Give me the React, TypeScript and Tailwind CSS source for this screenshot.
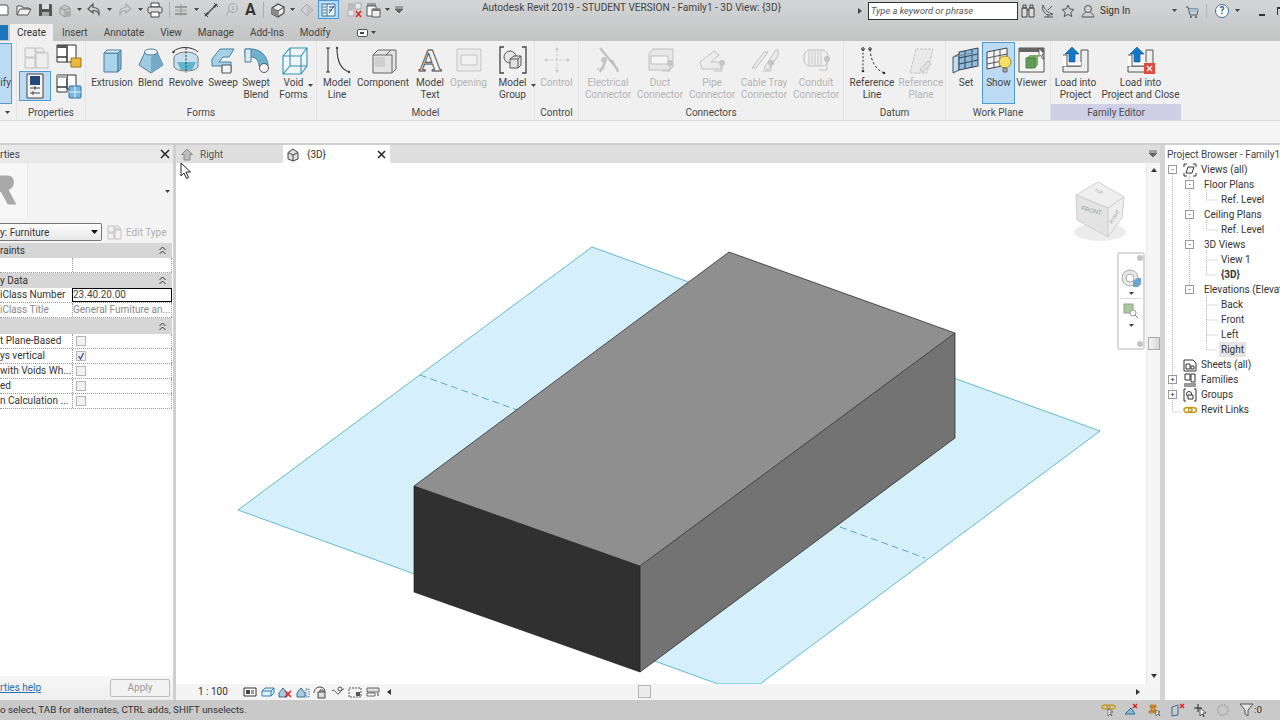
import type { ReactNode } from 'react'

const FONT = "font-['Roboto','Liberation_Sans',sans-serif]"

function Ic({ w = 28, h = 28, box, children, dim }: { w?: number; h?: number; box?: string; children: ReactNode; dim?: boolean }) {
  return (
    <svg width={w} height={h} viewBox={box ?? `0 0 ${w} ${h}`} className={dim ? 'shrink-0 overflow-visible opacity-35' : 'shrink-0 overflow-visible'}>
      {children}
    </svg>
  )
}

const Caret = () => (
  <svg width="5" height="3" viewBox="0 0 5 3" className="shrink-0">
    <path d="M0 0h5L2.5 3z" fill="#444" />
  </svg>
)

/* ---------- quick access icons ---------- */
const QNew = () => <Ic w={9} h={18}><path d="M-6 4h13l1 2v8H-6z" fill="#fff" stroke="#555" /></Ic>
const QOpen = () => <Ic w={16} h={18}><path d="M1 14V5h5l1 2h6v2M1 14l3-6h11l-3 6z" fill="#eee" stroke="#555" /></Ic>
const QSave = () => <Ic w={15} h={18}><path d="M1 3h12l1 1v11H1z" fill="#555" /><path d="M4 3h7v5H4z" fill="#ddd" /><path d="M4 11h7v4H4z" fill="#aaa" /></Ic>
const QSync = () => <Ic w={16} h={18}><path d="M3 7l5-3 5 3v6l-5 3-5-3z" fill="#c8c8c8" stroke="#999" /><path d="M8 9l5-2M8 9L3 7M8 9v7" stroke="#999" fill="none" /><circle cx="11" cy="13" r="3" fill="#aaa" /></Ic>
const QUndo = () => <Ic w={15} h={18}><path d="M6 3L1 8l5 4V9.5c3 0 5 1 6 4 1-5-2-7-6-7z" fill="none" stroke="#555" strokeWidth="1.2" /></Ic>
const QRedo = () => <Ic w={15} h={18} dim><path d="M9 3l5 5-5 4V9.5c-3 0-5 1-6 4-1-5 2-7 6-7z" fill="none" stroke="#666" strokeWidth="1.2" /></Ic>
const QPrint = () => <Ic w={16} h={18}><path d="M4 2h8v4H4z" fill="#fff" stroke="#444" /><rect x="1" y="6" width="14" height="6" rx="1.5" fill="#ddd" stroke="#444" /><path d="M4 11h8v5H4z" fill="#fff" stroke="#444" /></Ic>
const QAlign = () => <Ic w={14} h={18}><path d="M1 6h12M1 13h12" stroke="#888" strokeWidth="1.4" /><path d="M1 8h12v3H1z" fill="#bbb" /><path d="M7 3v12" stroke="#999" /></Ic>
const QMeasure = () => <Ic w={16} h={18}><path d="M2 15L14 3" stroke="#444" strokeWidth="1.3" /><path d="M1 12l4 4M11 2l4 4" stroke="#444" /><path d="M3 14l3-1-2-2zM13 4l-3 1 2 2z" fill="#333" /></Ic>
const QTag = () => <Ic w={14} h={18} dim><circle cx="9" cy="7" r="4.5" fill="none" stroke="#555" /><path d="M5 10l-3 5" stroke="#555" /><path d="M9 5v4" stroke="#555" /></Ic>
const Q3D = () => <Ic w={16} h={18}><path d="M2 7l6-4 6 3v6l-6 4-6-3z" fill="#e9e9e9" stroke="#444" strokeWidth="1.2" /><path d="M2 7l6 3 6-4M8 10v6" stroke="#444" fill="none" /><path d="M2 7l6 3v6l-6-3z" fill="#888" /></Ic>
const QSection = () => <Ic w={14} h={18} dim><path d="M7 3l6 6-6 6-6-6z" fill="none" stroke="#555" /><path d="M7 3l6 6-6 6z" fill="#aaa" /></Ic>
const QThin = () => (
  <div className="flex h-[19px] w-[21px] items-center justify-center border border-[#4f97d3] bg-[#bcdcf4]">
    <Ic w={15} h={15}><path d="M1 2h13v12H1z" fill="#e7f3fb" stroke="#3b6f94" /><path d="M6 2v12M2 5h3M2 8h3M2 11h3" stroke="#3b6f94" /><path d="M8 11l5-7M8 5h5M8 8h3" stroke="#2d4c6a" /></Ic>
  </div>
)
const QHidden = () => <Ic w={15} h={18}><path d="M1 2h6v6H1z" fill="#bbb" /><path d="M8 2h6v6H8z" fill="#e8e8e8" stroke="#aaa" /><path d="M1 9h6v6H1z" fill="#e8e8e8" stroke="#aaa" /><path d="M9 10l5 6M14 10l-5 6" stroke="#d22" strokeWidth="1.5" /></Ic>
const QSwitch = () => <Ic w={15} h={18}><path d="M1 2h9v3H1z" fill="#999" /><path d="M1 5h9v10H1z" fill="#fff" stroke="#555" /><path d="M6 8h8v8H6z" fill="#eee" stroke="#555" /><path d="M6 8h8v2H6z" fill="#777" /></Ic>
const QCustom = () => <Ic w={8} h={18}><path d="M0 6h8M0 8h8L4 12z" stroke="#666" fill="#666" /></Ic>

function QuickAccess() {
  return (
    <div className="flex h-[19px] w-[858px] shrink-0 items-center">
      <QNew />
      <div className="ml-[7px]"><QOpen /></div>
      <div className="ml-[6px]"><QSave /></div>
      <div className="ml-[4px]"><QSync /></div>
      <div className="ml-[4px]"><Caret /></div>
      <div className="ml-[5px]"><QUndo /></div>
      <div className="ml-[5px]"><Caret /></div>
      <div className="ml-[5px]"><QRedo /></div>
      <div className="ml-[6px]"><Caret /></div>
      <div className="ml-[4px]"><QPrint /></div>
      <div className="ml-[6px] h-[16px] w-px bg-[#aeb0b0]" />
      <div className="ml-[4px]"><QAlign /></div>
      <div className="ml-[6px]"><Caret /></div>
      <div className="ml-[4px]"><QMeasure /></div>
      <div className="ml-[5px]"><QTag /></div>
      <span className="ml-[7px] w-[13px] text-[16px] leading-[18px] font-bold text-[#333]">A</span>
      <div className="ml-[5px] h-[16px] w-px bg-[#aeb0b0]" />
      <div className="ml-[6px]"><Q3D /></div>
      <div className="ml-[4px]"><Caret /></div>
      <div className="ml-[5px]"><QSection /></div>
      <div className="ml-[4px]"><QThin /></div>
      <div className="ml-[8px]"><QHidden /></div>
      <div className="ml-[4px]"><QSwitch /></div>
      <div className="ml-[4px]"><Caret /></div>
      <div className="ml-[5px]"><QCustom /></div>
    </div>
  )
}

function TitleBar() {
  return (
    <div className="relative flex h-[22px] items-start">
      <QuickAccess />
      <div className="absolute top-[1px] left-[482px] text-[10.1px] leading-[14px] whitespace-nowrap text-[#444]">
        Autodesk Revit 2019 - STUDENT VERSION - Family1 - 3D View: {'{3D}'}
      </div>
      <div className="mt-px flex h-[19px] shrink-0 items-center">
        <svg width="4" height="6" viewBox="0 0 4 6" className="mr-[6px]"><path d="M0 0l4 3-4 3z" fill="#444" /></svg>
        <div className="flex h-[18px] w-[150px] items-center border border-[#333] bg-white pl-[2px] text-[9.3px] text-[#555] italic">
          Type a keyword or phrase
        </div>
        <div className="ml-[3px]">
          <Ic w={14} h={16}><path d="M1 5h5v9H1zM8 5h5v9H8z" fill="#ddd" stroke="#444" /><path d="M2 2h3v3H2zM9 2h3v3H9zM6 7h2" fill="none" stroke="#444" /></Ic>
        </div>
        <div className="ml-[6px]">
          <Ic w={14} h={16}><path d="M2 2c2 5 5 8 10 9-3 2-7 1-9-2S1 4 2 2z" fill="none" stroke="#555" /><path d="M7 7l4-4M3 14h9M7 11v3" stroke="#555" /></Ic>
        </div>
        <div className="ml-[6px]">
          <Ic w={14} h={16}><path d="M7 2l1.8 4 4.2.4-3.2 2.9 1 4.3L7 11.4l-3.8 2.2 1-4.3L1 6.4 5.2 6z" fill="none" stroke="#555" /></Ic>
        </div>
        <div className="ml-[6px]">
          <Ic w={14} h={16}><circle cx="7" cy="6" r="3.5" fill="none" stroke="#555" /><path d="M1 14c1-4 3-4 4-4.5M13 14c-1-4-3-4-4-4.5M1 14h12" fill="none" stroke="#555" /></Ic>
        </div>
        <span className="ml-[5px] w-[72px] shrink-0 text-[10px] text-[#333]">Sign In</span>
        <Caret />
        <div className="ml-[8px]">
          <Ic w={14} h={16}><path d="M1 4h2l2 8h7l1-6H4" fill="none" stroke="#555" /><circle cx="6" cy="14" r="1" fill="#555" /><circle cx="11" cy="14" r="1" fill="#555" /><path d="M4 6h9l-1 3H5z" fill="#9cc4dd" /></Ic>
        </div>
        <div className="ml-[7px] h-[14px] w-px bg-[#b5b6b6]" />
        <div className="ml-[8px] flex h-[14px] w-[14px] shrink-0 items-center justify-center rounded-full border border-[#3f6e9e] bg-white text-[10px] font-bold text-[#2c5f96]">?</div>
        <div className="ml-[6px]"><Caret /></div>
        <div className="mt-[8px] ml-[19px] h-[2px] w-[6px] shrink-0 bg-[#333]" />
        <div className="ml-[12px] h-[8px] w-[8px] shrink-0 border-t-2 border-l border-[#333]" />
      </div>
    </div>
  )
}

const TABS = ['Insert', 'Annotate', 'View', 'Manage', 'Add-Ins', 'Modify']

function TabBar() {
  return (
    <div className="flex h-[19px] items-end gap-[16px] text-[10px] text-[#444]">
      <div className="flex items-end gap-[2px]">
        <div className="mb-px h-[15px] w-[8px] bg-[#1b75bc]" />
        <div className="-mr-[7px] flex h-[17px] w-[43px] items-center justify-center bg-[#efefef] text-[#333]">Create</div>
      </div>
      {TABS.map((label) => (
        <div key={label} className="flex h-[17px] items-center">{label}</div>
      ))}
      <div className="ml-[10px] flex h-[17px] items-center gap-[3px]">
        <div className="flex h-[8px] w-[11px] items-center justify-center rounded-[2px] border border-[#555] bg-white">
          <div className="h-[2px] w-[4px] bg-[#444]" />
        </div>
        <Caret />
      </div>
    </div>
  )
}

/* ---------- ribbon icons ---------- */
const S = '#4d7f9d'
const Extrusion = () => <Ic><path d="M6 7h14v19H6z" fill="#a9d3e9" stroke={S} /><path d="M6 7l3-3h14l-3 3z" fill="#dceef7" stroke={S} /><path d="M20 7l3-3v19l-3 3z" fill="#7fb3ce" stroke={S} /></Ic>
const Blend = () => <Ic><path d="M8 6L2 19l12 8 12-8-6-13z" fill="#9ecbe3" stroke={S} /><path d="M14 27l12-8-6-13-6 5z" fill="#74aac8" /><ellipse cx="14" cy="6" rx="6.5" ry="3" fill="#eef7fb" stroke={S} /></Ic>
const Revolve = () => <Ic><path d="M2 12c0-3 5-6 12-6s12 3 12 6v8c0 3-5 5-12 5S2 23 2 20z" fill="#c7dfec" stroke="#777" /><path d="M5 16h19l-4 8H9z" fill="#5fb4cf" /><path d="M1 6C6 0 20 0 26 6" fill="none" stroke="#333" /><path d="M14 2v25" stroke="#333" strokeDasharray="2 1.5" /><circle cx="1.5" cy="6" r="1.2" fill="#333" /></Ic>
const Sweep = () => <Ic><path d="M3 13L11 3h14l-5 8h-6l-4 5h12v10H13v-6H3z" fill="#a6d2e8" stroke={S} /><path d="M13 19h9v8h-9z" fill="#f2f2f2" stroke="#555" /></Ic>
const SweptBlend = () => <Ic><path d="M3 3h6c10 0 17 8 17 17h-9c0-5-3-9-8-9H3z" fill="#6eb1cd" stroke={S} /><path d="M3 3h6v13H3z" fill="#d8ebf4" stroke={S} /><circle cx="22" cy="22" r="4.5" fill="#f4f4f4" stroke="#555" /></Ic>
const VoidF = () => <Ic><path d="M3 10h18v18H3zM3 10l7-8h17v18l-6 8M21 10l6-8M10 2v18h17M10 20l-7 8" fill="#f3fafd" fillOpacity=".5" stroke="#2f93b9" strokeWidth="1.1" /></Ic>
const ModelLine = () => <Ic><path d="M5 2v24M3 2h4M3 26h4" stroke="#333" /><path d="M14 2c0 14 4 22 13 24" fill="none" stroke="#444" strokeWidth="1.2" /><circle cx="14" cy="2" r="1.2" fill="#444" /><circle cx="26" cy="26" r="1.2" fill="#444" /></Ic>
const Component = () => <Ic><path d="M4 9l5-5h18v19l-4 4H4z" fill="#e3e3e3" stroke="#666" /><path d="M4 9h19v18" fill="none" stroke="#666" /><path d="M17 9l5-5" stroke="#666" /><path d="M6 11h10v10H6z" fill="#cfcfcf" /></Ic>
const ModelText = () => (
  <Ic>
    <text x="14" y="25" textAnchor="middle" fontFamily="Liberation Serif" fontSize="32" fontWeight="700" fill="#f5f5f5" stroke="#444" strokeWidth="0.9">A</text>
  </Ic>
)
const Opening = () => <Ic dim><path d="M2 3h24v22H2z" fill="#e6e6e6" stroke="#777" /><path d="M6 9h16v10H6z" fill="#f4f4f4" stroke="#777" /></Ic>
const ModelGroup = () => <Ic><path d="M5 1H1v26h4M23 1h4v26h-4" fill="none" stroke="#444" strokeWidth="1.3" /><circle cx="11" cy="11" r="6" fill="#e6e6e6" stroke="#555" /><path d="M11 13l4-3h7v9l-3 3h-8z" fill="#e3e3e3" stroke="#555" /><path d="M11 13h8v9M19 13l3-3" fill="none" stroke="#555" /></Ic>
const Control = () => <Ic dim><path d="M14 3v22M3 14h22" stroke="#888" strokeDasharray="3 1.5" /><path d="M14 1l-2 3h4zM14 27l-2-3h4zM1 14l3-2v4zM27 14l-3-2v4z" fill="#888" /></Ic>
const Electrical = () => <Ic dim><path d="M6 2l18 22M12 14l-6 12M18 14l6 12" stroke="#666" strokeWidth="2" /><circle cx="10" cy="14" r="3" fill="#777" /><path d="M10 17v6H3" stroke="#666" fill="none" /></Ic>
const Duct = () => <Ic dim><path d="M3 8l4-5h20v18l-4 3H3z" fill="#d8d8d8" stroke="#666" /><path d="M5 10h17v8H5z" fill="#fff" stroke="#666" /><circle cx="24" cy="17" r="3" fill="#777" /><path d="M24 20v5h-8" stroke="#666" fill="none" /></Ic>
const Pipe = () => <Ic dim><path d="M2 16l14-11 5 4-8 7h10v7H4z" fill="#e5e5e5" stroke="#666" /><circle cx="24" cy="17" r="3" fill="#777" /><path d="M24 20v5h-8" stroke="#666" fill="none" /></Ic>
const CableTray = () => <Ic dim><path d="M2 22L14 6h4L6 22zM14 22L26 4h2v6L18 24z" fill="#e2e2e2" stroke="#666" /><circle cx="21" cy="17" r="3" fill="#777" /><path d="M21 20v5h-8" stroke="#666" fill="none" /></Ic>
const Conduit = () => <Ic dim><rect x="2" y="4" width="24" height="16" rx="6" fill="#eee" stroke="#666" /><path d="M7 5v14M10 5v14M13 5v14M16 5v14M19 5v14" stroke="#777" /><circle cx="25" cy="13" r="3" fill="#777" /><path d="M25 16v8h-8" stroke="#666" fill="none" /></Ic>
const RefLine = () => <Ic><path d="M5 3v22" stroke="#333" strokeDasharray="2 1.6" /><path d="M12 3c1 12 5 20 14 24" fill="none" stroke="#333" strokeDasharray="2.5 2" /><circle cx="5" cy="25" r="1.3" fill="#333" /><circle cx="5" cy="3" r="1.3" fill="none" stroke="#333" /><circle cx="12" cy="3" r="1.3" fill="none" stroke="#333" /><circle cx="26" cy="27" r="1.3" fill="#333" /></Ic>
const RefPlane = () => <Ic dim><path d="M9 3h17l-6 24H3z" fill="#ddd" stroke="#777" strokeDasharray="3 1" /><path d="M13 24l8-9 3 3-8 8z" fill="#ccc" stroke="#666" /></Ic>
const SetIc = () => <Ic><path d="M1 11l6-3v16l-6 3z" fill="#c6dceb" stroke="#456" /><path d="M7 6l19-4v18L7 24z" fill="#8fbcdc" stroke="#345" /><path d="M13 5v18M20 3.5v18M7 12l19-4M7 18l19-4" stroke="#345" /><path d="M1 11l19-4v13" fill="none" stroke="#789" /></Ic>
const ShowIc = () => <Ic><path d="M2 6l20-4v17L2 23z" fill="#f3f6f8" stroke="#444" /><path d="M9 5v17M15 4v17M2 12l20-4M2 18l20-4" stroke="#555" /><circle cx="20" cy="16" r="6" fill="#f7e06a" stroke="#a88a25" /><path d="M18 22h4v4h-4z" fill="#aaa" stroke="#666" /></Ic>
const ViewerIc = () => (
  <Ic>
    <path d="M1 2h25v24H1z" fill="#f4f4f4" stroke="#555" /><path d="M1 2h25v4H1z" fill="#666" />
    <path d="M8 12l4-3h8v10l-3 3H8z" fill="#79ad68" /><path d="M8 12h9v10H8z" fill="#5f9d55" stroke="#4f7f44" />
    <path d="M21 2l5 6-2 .5 2 4-1.5.5-2-4-1.5 1.5z" fill="#fff" stroke="#333" strokeWidth=".7" />
  </Ic>
)
const Load = ({ close }: { close?: boolean }) => (
  <Ic w={28} h={28}>
    <path d="M19 4h7v22H1v-6h18z" fill="#eee" stroke="#555" />
    <path d="M1 9h6v11H1zM7 16h12v4H7z" fill="#fff" />
    <path d="M1 9h4v11h14" fill="none" stroke="#555" />
    <path d="M10 1l7 7h-4v8H7V8H3z" fill="#1277c8" stroke="#0b4f8a" strokeWidth=".6" />
    {close && <><rect x="17" y="17" width="11" height="11" fill="#dd4c3f" /><path d="M20 20l5 5M25 20l-5 5" stroke="#fff" strokeWidth="1.3" /></>}
  </Ic>
)

function RibbonBtn({ label, label2, icon, w, dim, caret, active }: { label: string; label2?: string; icon: ReactNode; w: number; dim?: boolean; caret?: boolean; active?: boolean }) {
  const box = active ? 'border border-[#4e9bd6] bg-[#bcdaf2]' : 'border border-transparent'
  const tone = dim ? 'text-[#b4b4b4]' : 'text-[#444]'
  return (
    <div className={`relative flex h-[62px] shrink-0 flex-col items-center ${box}`} style={{ width: w }}>
      <div className="mt-[3px] flex h-[31px] items-start justify-center">{icon}</div>
      <span className={`text-center leading-[12px] whitespace-nowrap ${tone}`}>{label}</span>
      {label2 && <span className={`text-center leading-[12px] whitespace-nowrap ${tone}`}>{label2}</span>}
      {caret && <div className="absolute right-[2px] bottom-[16px]"><Caret /></div>}
    </div>
  )
}

function Panel({ title, w, children, accent, line = true }: { title: string; w: number; children: ReactNode; accent?: boolean; line?: boolean }) {
  return (
    <div className={`flex h-[79px] shrink-0 flex-col ${line ? 'border-r border-[#e2e2e2]' : ''}`} style={{ width: w }}>
      <div className="flex h-[63px] pt-px">{children}</div>
      <div className={`flex h-[16px] items-center justify-center pt-px text-[#4a4a4a] ${accent ? 'bg-[#cfcfe6]' : ''}`}>{title}</div>
    </div>
  )
}

function Ribbon() {
  return (
    <div className="flex h-[79px] bg-[#f0f0f0] text-[10px]">
      <div className="flex h-[79px] w-[17px] shrink-0 flex-col border-r border-[#e2e2e2]">
        <div className="mt-[2px] flex h-[61px] w-[12px] items-center justify-end border border-l-0 border-[#4e9bd6] bg-[#bcdaf2] pt-[17px] text-[#444]">ify</div>
        <div className="flex h-[16px] items-center pl-[5px]"><Caret /></div>
      </div>
      <Panel title="Properties" w={69}>
        <div className="grid h-[60px] grid-cols-[34px_31px] items-center pl-[2px]">
          <div className="flex justify-center"><Ic w={25} h={25} dim><path d="M1 4h10v9H1zM1 14h10v10H1zM12 4h6l3 4H12zM12 9h12v15H12z" fill="#eee" stroke="#666" /></Ic></div>
          <div className="flex justify-center"><Ic w={26} h={26}><path d="M1 2h10v12H1zM11 2h9v17h-9zM1 14h10v5H1z" fill="#fff" stroke="#333" /><path d="M1 2h10v3H1z" fill="#555" /><path d="M15 15h10v9H15z" fill="#e8b93a" stroke="#9a7720" /></Ic></div>
          <div className="flex h-[30px] w-[32px] items-center justify-center border border-[#4e9bd6] bg-[#bcdaf2]">
            <Ic w={18} h={26}><path d="M1 1h16v24H1z" fill="#f4f4f4" stroke="#444" /><path d="M4 3h10v9H4z" fill="#22497a" /><path d="M4 15h10M4 20h10" stroke="#444" /><path d="M9 13v4M7 18v4" stroke="#444" /></Ic>
          </div>
          <div className="flex justify-center"><Ic w={26} h={26}><path d="M1 2h10v12H1zM11 2h9v14h-9zM1 14h10v5H1z" fill="#fff" stroke="#333" /><path d="M1 2h10v3H1z" fill="#aaa" /><rect x="13" y="13" width="12" height="12" rx="1" fill="#7bb6e0" stroke="#2a6ca5" /><path d="M19 13v12M13 19h12" stroke="#e4f2fb" /></Ic></div>
        </div>
      </Panel>
      <Panel title="Forms" w={231}>
        <div className="flex pl-[4px]">
          <RibbonBtn w={44} label="Extrusion" icon={<Extrusion />} />
          <RibbonBtn w={33} label="Blend" icon={<Blend />} />
          <RibbonBtn w={38} label="Revolve" icon={<Revolve />} />
          <RibbonBtn w={36} label="Sweep" icon={<Sweep />} />
          <RibbonBtn w={30} label="Swept" label2="Blend" icon={<SweptBlend />} />
          <RibbonBtn w={45} label="Void" label2="Forms" caret icon={<VoidF />} />
        </div>
      </Panel>
      <Panel title="Model" w={218}>
        <RibbonBtn w={40} label="Model" label2="Line" icon={<ModelLine />} />
        <RibbonBtn w={52} label="Component" icon={<Component />} />
        <RibbonBtn w={42} label="Model" label2="Text" icon={<ModelText />} />
        <RibbonBtn w={35} label="Opening" dim icon={<Opening />} />
        <RibbonBtn w={53} label="Model" label2="Group" caret icon={<ModelGroup />} />
      </Panel>
      <Panel title="Control" w={44}>
        <RibbonBtn w={43} label="Control" dim icon={<Control />} />
      </Panel>
      <Panel title="Connectors" w={265}>
        <div className="flex pl-[3px]">
          <RibbonBtn w={52} label="Electrical" label2="Connector" dim icon={<Electrical />} />
          <RibbonBtn w={52} label="Duct" label2="Connector" dim icon={<Duct />} />
          <RibbonBtn w={52} label="Pipe" label2="Connector" dim icon={<Pipe />} />
          <RibbonBtn w={52} label="Cable Tray" label2="Connector" dim icon={<CableTray />} />
          <RibbonBtn w={52} label="Conduit" label2="Connector" dim icon={<Conduit />} />
        </div>
      </Panel>
      <Panel title="Datum" w={102}>
        <div className="flex pl-[4px]">
          <RibbonBtn w={48} label="Reference" label2="Line" icon={<RefLine />} />
          <RibbonBtn w={50} label="Reference" label2="Plane" dim icon={<RefPlane />} />
        </div>
      </Panel>
      <Panel title="Work Plane" w={105}>
        <div className="flex pl-[4px]">
          <RibbonBtn w={32} label="Set" icon={<SetIc />} />
          <RibbonBtn w={33} label="Show" active icon={<ShowIc />} />
          <RibbonBtn w={33} label="Viewer" icon={<ViewerIc />} />
        </div>
      </Panel>
      <Panel title="Family Editor" w={130} accent line={false}>
        <div className="flex">
          <RibbonBtn w={49} label="Load into" label2="Project" icon={<Load />} />
          <RibbonBtn w={81} label="Load into" label2="Project and Close" icon={<Load close />} />
        </div>
      </Panel>
    </div>
  )
}

/* ---------- properties palette ---------- */
function SectionHead({ label, tall }: { label: string; tall?: boolean }) {
  return (
    <div className={`flex items-center justify-between bg-[#d6d6d6] pr-[6px] text-[#333] ${tall ? 'h-[16px]' : 'h-[15px]'}`}>
      <span>{label}</span>
      <svg width="7" height="9" viewBox="0 0 7 9"><path d="M0.5 4L3.5 1l3 3M0.5 8l3-3 3 3" fill="none" stroke="#333" /></svg>
    </div>
  )
}

function PropRow({ label, muted, children, active }: { label?: string; muted?: boolean; children?: ReactNode; active?: boolean }) {
  return (
    <div className="grid h-[15px] grid-cols-[72px_100px] border-b border-dotted border-[#999] bg-white">
      <span className={`truncate leading-[14px] ${muted ? 'text-[#888]' : 'text-[#333]'}`}>{label}</span>
      <div className={`overflow-hidden whitespace-nowrap ${active ? 'border border-black leading-[12px] text-[#444]' : 'border-x border-dotted border-[#999] leading-[14px] text-[#888]'}`}>
        {children}
      </div>
    </div>
  )
}

const Check = ({ on }: { on?: boolean }) => (
  <div className="mt-[2px] ml-[3px] flex h-[10px] w-[10px] items-center justify-center border border-[#b5b5b5] bg-[#f2f2f2]">
    {on && <svg width="8" height="8" viewBox="0 0 8 8"><path d="M1.5 4l2 3 3-6" fill="none" stroke="#3a4f8c" strokeWidth="1.3" /></svg>}
  </div>
)

function Properties() {
  return (
    <div className="flex w-[173px] shrink-0 flex-col bg-white text-[10px]">
      <div className="flex h-[18px] items-center justify-between bg-[#e9e9e9] pr-[3px] text-[#444]">
        <span>rties</span>
        <svg width="10" height="10" viewBox="0 0 10 10"><path d="M1 1l8 8M9 1l-8 8" stroke="#222" strokeWidth="1.5" /></svg>
      </div>
      <div className="flex h-[56px] items-center bg-[#f3f3f3]">
        <div className="flex h-[54px] w-[28px] items-center overflow-hidden border-r border-[#e6e6e6] bg-[#f7f7f7]">
          <svg width="28" height="36" viewBox="0 0 28 36"><path d="M-10 2H8c8 0 9 12 1 15l8 15H8L1 19h-5v13h-6z" fill="#a9a9a9" /></svg>
        </div>
        <div className="flex flex-1 justify-end pr-[3px]"><Caret /></div>
      </div>
      <div className="flex h-[24px] items-center bg-[#f3f3f3] pt-[2px]">
        <div className="flex h-[18px] w-[102px] items-center justify-between rounded-r-[2px] border border-l-0 border-[#777] bg-gradient-to-b from-white to-[#e6e6e6] pr-[3px] text-[#333]">
          <span>y: Furniture</span>
          <svg width="7" height="4" viewBox="0 0 7 4"><path d="M0 0h7L3.5 4z" fill="#111" /></svg>
        </div>
        <div className="ml-[5px]"><Ic w={15} h={15} dim><path d="M1 1h6v6H1zM1 8h6v6H1zM8 1h3l3 3H8zM8 5h6v9H8z" fill="#eee" stroke="#666" /></Ic></div>
        <span className="ml-[4px] text-[#b0b0b0]">Edit Type</span>
      </div>
      <div className="w-[172px]">
        <SectionHead label="raints" />
        <PropRow />
        <SectionHead label="y Data" />
        <PropRow label="iClass Number" active>23.40.20.00</PropRow>
        <PropRow label="iClass Title" muted>General Furniture an...</PropRow>
        <SectionHead label="" tall />
        <PropRow label="t Plane-Based"><Check /></PropRow>
        <PropRow label="ys vertical"><Check on /></PropRow>
        <PropRow label="with Voids Wh..."><Check /></PropRow>
        <PropRow label="ed"><Check /></PropRow>
        <PropRow label="n Calculation ..."><Check /></PropRow>
      </div>
      <div className="flex-1" />
      <div className="flex h-[24px] items-center justify-between bg-gradient-to-b from-[#f7f7f7] to-[#eeeeee] pr-[3px] pb-px">
        <span className="text-[#2a6fb0] underline">rties help</span>
        <div className="flex h-[18px] w-[60px] items-center justify-center rounded-[2px] border border-[#bcbcbc] bg-[#f2f2f2] text-[#999]">Apply</div>
      </div>
    </div>
  )
}

/* ---------- view ---------- */
function ViewTabs() {
  return (
    <div className="flex h-[18px] items-center bg-[#dfdfdf] text-[10px]">
      <div className="ml-[2px] flex h-full w-[105px] items-center">
        <div className="ml-[3px]"><Ic w={12} h={13}><path d="M6 1L.5 6.5H3V12h6V6.5h2.5z" fill="#bdbdbd" stroke="#888" /></Ic></div>
        <span className="ml-[7px] text-[#555]">Right</span>
      </div>
      <div className="flex h-full w-[107px] items-center bg-white">
        <div className="ml-[4px]"><Ic w={12} h={13}><path d="M1 4.5L6 1l5 3.5V11l-5 2-5-2z" fill="#ddd" stroke="#444" /><path d="M1 4.5L6 7l5-2.5M6 7v6" fill="none" stroke="#444" /></Ic></div>
        <span className="ml-[8px] text-[#333]">{'{3D}'}</span>
        <svg width="9" height="9" viewBox="0 0 9 9" className="ml-[51px]"><path d="M1 1l7 7M8 1l-7 7" stroke="#222" strokeWidth="1.5" /></svg>
      </div>
      <div className="flex flex-1 justify-end pr-[3px]"><QCustom /></div>
    </div>
  )
}

function Model() {
  return (
    <svg viewBox="176 163 970 521" className="absolute inset-0 h-full w-full">
      <path d="M592 247L1100 431 760 684 718 684 238 510z" fill="#d6f0fb" stroke="#3fa9bd" strokeWidth="0.8" />
      <path d="M420 375L520 411M840 527L925 558" stroke="#3a94aa" strokeWidth="0.8" strokeDasharray="7 4" fill="none" />
      <path d="M729 252L955 333 640 566 414 486z" fill="#8f8f8f" />
      <path d="M414 486L640 566V672L414 592z" fill="#303030" />
      <path d="M640 566L955 333V438L640 672z" fill="#737373" />
      <path d="M729 252L955 333V438L640 672 414 592V486zM414 486L640 566 955 333M640 566V672" fill="none" stroke="#1c1c1c" strokeWidth="0.7" />
    </svg>
  )
}

function ViewCube() {
  return (
    <svg width="64" height="72" viewBox="0 0 64 72" className="absolute top-[15px] left-[894px]">
      <ellipse cx="30" cy="54" rx="26" ry="9" fill="#ececec" />
      <path d="M6 17L28 4 54 19 38 30z" fill="#efefef" stroke="#cfcfcf" />
      <path d="M6 17l32 13v29L7 42z" fill="#e3e3e3" stroke="#cfcfcf" />
      <path d="M38 30l16-11-2 21-14 19z" fill="#eeeeee" stroke="#cfcfcf" />
      <text x="11" y="32" fontSize="6" fill="#999" transform="rotate(14 11 32)" fontFamily="Liberation Sans">FRONT</text>
      <text x="42" y="46" fontSize="5" fill="#999" transform="rotate(-58 42 46)" fontFamily="Liberation Sans">RIGHT</text>
      <text x="24" y="13" fontSize="4.5" fill="#aaa" transform="rotate(25 24 13)" fontFamily="Liberation Sans">TOP</text>
    </svg>
  )
}

function NavBar() {
  return (
    <div className="absolute top-[89px] left-[941px] flex h-[98px] w-[28px] flex-col items-center rounded-[3px] border-2 border-[#d8d8d8] bg-white/70">
      <div className="mt-[1px] ml-[18px] h-[6px] w-[6px] rounded-full bg-[#c4c4c4]" />
      <div className="mt-[7px]">
        <Ic w={22} h={22}><circle cx="10" cy="10" r="8" fill="#e8e8e8" stroke="#aaa" /><circle cx="10" cy="10" r="4" fill="#fff" stroke="#aaa" /><path d="M13 13l4-3h4v6l-3 3h-5z" fill="#6aa5cf" /></Ic>
      </div>
      <div className="mt-[2px]"><Caret /></div>
      <div className="mt-[3px] h-px w-[22px] bg-[#ddd]" />
      <div className="mt-[4px]">
        <Ic w={16} h={16}><rect x="1" y="1" width="9" height="9" fill="#a8c79b" stroke="#8fa886" /><circle cx="10" cy="10" r="3" fill="#fff" stroke="#999" /><path d="M12 12l3 3" stroke="#888" /></Ic>
      </div>
      <div className="mt-[5px]"><Caret /></div>
      <div className="mt-auto mb-[1px] ml-[18px] h-[6px] w-[6px] rounded-full bg-[#c4c4c4]" />
    </div>
  )
}

function VScroll() {
  return (
    <div className="flex w-[14px] shrink-0 flex-col items-center border-l border-[#e8e8e8] bg-[#f5f5f5]">
      <svg width="6" height="4" viewBox="0 0 6 4" className="mt-[5px]"><path d="M0 4h6L3 0z" fill="#333" /></svg>
      <div className="mt-[165px] h-[13px] w-[12px] border border-[#aaa] bg-gradient-to-r from-[#f2f2f2] to-[#d9d9d9]" />
      <div className="flex-1" />
      <svg width="6" height="4" viewBox="0 0 6 4" className="mb-[6px]"><path d="M0 0h6L3 4z" fill="#333" /></svg>
    </div>
  )
}

const VIEW_ICONS: ReactNode[] = [
  <><path d="M1 3h12v8H1z" fill="#fff" stroke="#333" /><path d="M3 5h4v4H3z" fill="#444" /><path d="M8 5h3v4H8z" fill="#999" /></>,
  <><path d="M1 6l3-3h9v5l-3 3H1z" fill="#dff0fa" stroke="#2e7fb4" /><path d="M1 6h9v5M10 6l3-3" fill="none" stroke="#2e7fb4" /></>,
  <><path d="M1 8l4-5 4 5v4H1z" fill="#a8cbe2" stroke="#3a6f96" /><path d="M7 6l6 6M13 6l-6 6" stroke="#d22" strokeWidth="1.6" /></>,
  <><path d="M1 8l4-5 4 5v4H1z" fill="#a8cbe2" stroke="#3a6f96" /><path d="M10 4h3v8h-3z" fill="none" stroke="#3a6f96" strokeDasharray="1.5 1" /></>,
  <><path d="M1 8c0-4 3-6 6-6s5 2 5 5" fill="none" stroke="#444" /><path d="M5 7h7v6H5z" fill="#ddd" stroke="#444" /><path d="M7 7V5h3v2" fill="none" stroke="#444" /></>,
  <><path d="M1 6c3-3 4 3 6 3s3-5 6-5" fill="none" stroke="#555" /><circle cx="9" cy="4" r="2" fill="none" stroke="#555" /></>,
  <><path d="M1 3h12v9H1z" fill="none" stroke="#555" strokeDasharray="2 1" /><path d="M8 7h4v4H8z" fill="#555" /></>,
  <><path d="M1 3h12v4H1z" fill="#ddd" stroke="#666" /><path d="M1 8h8v3H1z" fill="#fff" stroke="#666" /><path d="M11 8h2v3h-2z" fill="#999" /></>,
]

function ViewBottom() {
  return (
    <div className="flex h-[16px] items-center bg-[#f4f4f4] pb-px text-[10px] text-[#333]">
      <span className="ml-[22px] w-[45px] shrink-0">1 : 100</span>
      <div className="flex items-center gap-[3.5px]">
        {VIEW_ICONS.map((g, i) => <Ic key={i} w={14} h={14}>{g}</Ic>)}
      </div>
      <svg width="4" height="6" viewBox="0 0 4 6" className="ml-[7px]"><path d="M4 0L0 3l4 3z" fill="#333" /></svg>
      <div className="ml-[247px] h-[13px] w-[13px] border border-[#b5b5b5] bg-[#ececec]" />
      <div className="flex-1" />
      <svg width="4" height="6" viewBox="0 0 4 6" className="mr-[20px]"><path d="M0 0l4 3-4 3z" fill="#333" /></svg>
    </div>
  )
}

/* ---------- project browser ---------- */
type Node = { label: string; indent: number; box?: '-' | '+'; icon?: ReactNode; bold?: boolean; hit?: boolean }

const ViewsIcon = <Ic w={14} h={14}><path d="M1 4V1h3M10 1h3v3M13 10v3h-3M4 13H1v-3" fill="none" stroke="#333" /><path d="M5 4h6l-2 6H3z" fill="none" stroke="#333" /></Ic>
const SheetIcon = <Ic w={14} h={14}><path d="M1 2h9l3 3v8H1z" fill="#fff" stroke="#333" /><path d="M3 6h4v5H3zM8 8h3v3H8z" fill="none" stroke="#333" /></Ic>
const FamilyIcon = <Ic w={14} h={14}><path d="M2 1h5v6H2zM8 1h4v8H8zM1 11h12" fill="#fff" stroke="#333" /><path d="M1 13h12" stroke="#333" /></Ic>
const GroupIcon = <Ic w={14} h={14}><path d="M3 1H1v12h2M11 1h2v12h-2" fill="none" stroke="#333" /><circle cx="6" cy="6" r="2.5" fill="none" stroke="#333" /><path d="M5 7h5v4H5z" fill="#fff" stroke="#333" /></Ic>
const LinkIcon = <Ic w={14} h={14}><ellipse cx="5" cy="7" rx="4" ry="2.5" fill="none" stroke="#c29a1c" strokeWidth="1.6" /><ellipse cx="9.5" cy="7" rx="4" ry="2.5" fill="none" stroke="#c29a1c" strokeWidth="1.6" /></Ic>

const TREE: Node[] = [
  { label: 'Views (all)', indent: 0, box: '-', icon: ViewsIcon },
  { label: 'Floor Plans', indent: 1, box: '-' },
  { label: 'Ref. Level', indent: 2 },
  { label: 'Ceiling Plans', indent: 1, box: '-' },
  { label: 'Ref. Level', indent: 2 },
  { label: '3D Views', indent: 1, box: '-' },
  { label: 'View 1', indent: 2 },
  { label: '{3D}', indent: 2, bold: true },
  { label: 'Elevations (Elevat', indent: 1, box: '-' },
  { label: 'Back', indent: 2 },
  { label: 'Front', indent: 2 },
  { label: 'Left', indent: 2 },
  { label: 'Right', indent: 2, hit: true },
  { label: 'Sheets (all)', indent: 0, icon: SheetIcon },
  { label: 'Families', indent: 0, box: '+', icon: FamilyIcon },
  { label: 'Groups', indent: 0, box: '+', icon: GroupIcon },
  { label: 'Revit Links', indent: 0, icon: LinkIcon },
]

function TreeRow({ n }: { n: Node }) {
  return (
    <div className="flex h-[15px] items-center whitespace-nowrap">
      {n.indent === 2 ? (
        <span className={`ml-[54px] px-[2px] leading-[15px] ${n.bold ? 'font-bold' : ''} ${n.hit ? 'bg-[#e4e4e4]' : ''}`}>{n.label}</span>
      ) : (
        <>
          <div className={`flex w-[9px] shrink-0 items-center justify-center ${n.indent === 0 ? 'ml-[3px]' : 'ml-[20px]'}`}>
            {n.box && (
              <div className="flex h-[9px] w-[9px] items-center justify-center border border-[#999] bg-white text-[8px] leading-[7px] text-[#333]">{n.box}</div>
            )}
          </div>
          {n.icon ? <div className="ml-[6px] w-[14px]">{n.icon}</div> : null}
          <span className={n.indent === 0 ? 'ml-[4px]' : 'ml-[10px]'}>{n.label}</span>
        </>
      )}
    </div>
  )
}

function Browser() {
  return (
    <div className="relative flex-1 overflow-hidden bg-white text-[10px] text-[#333]">
      <div className="flex h-[17px] items-center pt-px pl-[2px] whitespace-nowrap text-[#444]">Project Browser - Family1</div>
      <svg width="60" height="270" viewBox="0 0 60 270" className="absolute top-[17px] left-0">
        <g stroke="#bbb" strokeDasharray="1 1" fill="none">
          <path d="M7.5 12V250h10M7.5 205h3M24.5 12v120M24.5 22.5h3M24.5 52h3M24.5 82h3M24.5 127h3" />
          <path d="M41.5 28v10h11M41.5 58v10h11M41.5 88v25h11M41.5 98h11M41.5 133v55h11M41.5 143h11M41.5 158h11M41.5 173h11" />
        </g>
      </svg>
      <div className="relative">
        {TREE.map((n, i) => <TreeRow key={i} n={n} />)}
      </div>
    </div>
  )
}

const Cursor = () => (
  <svg width="12" height="18" viewBox="0 0 12 18" className="absolute -top-[1px] left-[4px]">
    <path d="M1 1v13l3-3 2.5 5.5 2-1L6 10h4.5z" fill="#fff" stroke="#222" />
  </svg>
)

function StatusBar() {
  return (
    <div className="flex h-[20px] items-center justify-between bg-[#c9c9c9] pr-[18px] text-[9.8px] text-[#333]">
      <span>o select, TAB for alternates, CTRL adds, SHIFT unselects.</span>
      <div className="flex items-center gap-[8px]">
        <Ic w={15} h={14}><ellipse cx="5" cy="4" rx="4" ry="2" fill="none" stroke="#c29a1c" strokeWidth="1.4" /><ellipse cx="10" cy="4" rx="4" ry="2" fill="none" stroke="#c29a1c" strokeWidth="1.4" /><path d="M7 6v7l2-2 2 2-2-4h3z" fill="#fff" stroke="#333" strokeWidth=".6" /></Ic>
        <Ic w={15} h={14}><path d="M1 11l6-6 4 6z" fill="#8fb9d8" stroke="#2e6f9c" /><path d="M9 1l4 4M13 1L9 5" stroke="#d22" strokeWidth="1.4" /></Ic>
        <Ic w={15} h={14}><path d="M3 2h6v2H3zM4 4h4v4H4zM2 8h8v2H2z" fill="#e59c3d" stroke="#9a6315" strokeWidth=".6" /><path d="M9 7v6l2-2 2 2-2-4h2z" fill="#fff" stroke="#333" strokeWidth=".6" /></Ic>
        <Ic w={15} h={14}><path d="M2 4l6-2v10l-6 1z" fill="none" stroke="#2e6f9c" /><path d="M10 1l4 4M14 1l-4 4" stroke="#d22" strokeWidth="1.4" /></Ic>
        <Ic w={15} h={14}><path d="M5 1v8M1 5h8" stroke="#222" /><path d="M7 5v8l2-2 2 3-1-4h3z" fill="#fff" stroke="#222" strokeWidth=".7" /></Ic>
        <Ic w={15} h={14} dim><circle cx="7" cy="7" r="5" fill="none" stroke="#777" strokeWidth="2" strokeDasharray="2 1" /></Ic>
        <div className="flex items-center">
          <Ic w={15} h={14}><path d="M1 1h13L9 7v6l-3-2V7z" fill="#e4e4e4" stroke="#555" /></Ic>
          <span>:0</span>
        </div>
      </div>
    </div>
  )
}

export default function App() {
  return (
    <div className={`flex h-[720px] w-[1280px] flex-col overflow-hidden bg-[#f5f5f5] ${FONT}`}>
      <div className="bg-gradient-to-b from-[#d3d5d6] to-[#c3c4c4]">
        <TitleBar />
        <TabBar />
      </div>
      <Ribbon />
      <div className="h-[23px] border-t border-[#dcdcdc] bg-[#f5f5f5]" />
      <div className="h-[2px] bg-[#cfcfcf]" />
      <div className="flex h-[555px]">
        <Properties />
        <div className="w-[3px] shrink-0 bg-[#cfcfcf]" />
        <div className="flex w-[984px] shrink-0 flex-col">
          <ViewTabs />
          <div className="relative flex flex-1">
            <div className="relative flex-1 overflow-hidden bg-white">
              <Model />
              <ViewCube />
              <NavBar />
            </div>
            <VScroll />
            <Cursor />
          </div>
          <ViewBottom />
        </div>
        <div className="w-[5px] shrink-0 bg-[#d4d4d4]" />
        <Browser />
      </div>
      <StatusBar />
    </div>
  )
}
